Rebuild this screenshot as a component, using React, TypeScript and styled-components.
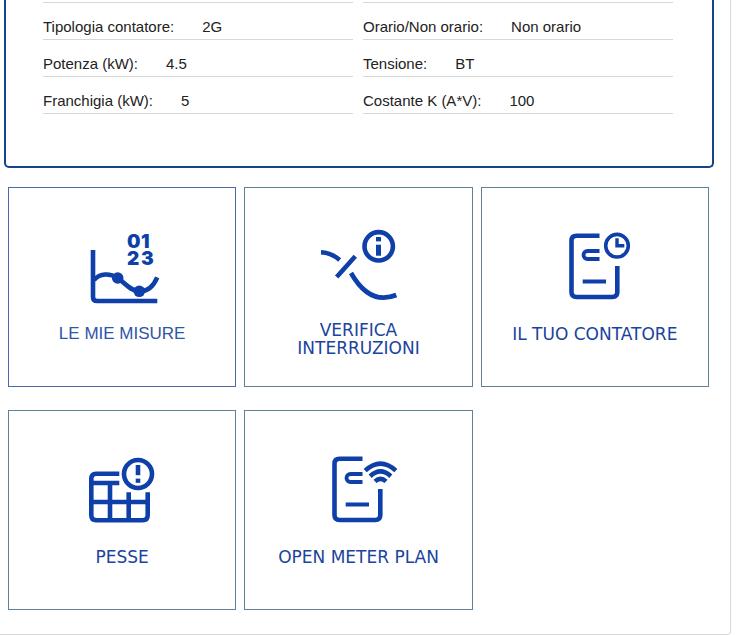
import React from "react";
import styled, { createGlobalStyle } from "styled-components";

const GlobalStyle = createGlobalStyle`
  *, *::before, *::after { box-sizing: border-box; }
  body { margin: 0; background: #fff; font-family: "Liberation Sans", Arial, sans-serif; }
`;

const BLUE = "#0f3fa8";

const Page = styled.main`
  margin-right: 13px;
  padding: 0 16px 24px 4px;
  border: solid #d9d9d9;
  border-width: 0 1px 1px 0;
  border-bottom-right-radius: 4px;
`;

const SupplyPanel = styled.section`
  display: grid;
  grid-template-columns: 1fr 1fr;
  gap: 10px;
  padding: 2px 39px 52px 37px;
  border: solid #15448c;
  border-width: 0 2px 2px;
  border-radius: 0 0 5px 5px;
`;

const Details = styled.dl`
  margin: 0;
  border-top: 1px solid #d6d8d8;
`;

const Detail = styled.div`
  display: flex;
  gap: 28px;
  padding: 15px 0 3px;
  border-bottom: 1px solid #d6d8d8;
  font-size: 15px;
  line-height: 18px;
  color: #222;
`;

const Term = styled.dt`
  margin: 0;
`;

const Value = styled.dd`
  margin: 0;
`;

const Services = styled.nav`
  display: grid;
  grid-template-columns: repeat(3, 1fr);
  grid-auto-rows: minmax(200px, auto);
  gap: 23px 8px;
  margin: 19px 5px 0 4px;
`;

const Card = styled.a<{ $active?: boolean }>`
  display: flex;
  flex-direction: column;
  align-items: center;
  padding-top: 40px;
  border: 1px solid ${(p) => (p.$active ? "#4a69a8" : "#5f8097")};
  background: #fff;
  color: #1a449c;
  text-decoration: none;
`;

const Label = styled.span<{ $plain?: boolean; $tall?: boolean }>`
  margin-top: ${(p) => (p.$tall ? 13 : 17)}px;
  font-family: ${(p) => (p.$plain ? '"Liberation Sans", Arial, sans-serif' : 'Verdana, "DejaVu Sans", sans-serif')};
  font-size: 17px;
  line-height: 18px;
  text-align: center;
  color: ${(p) => (p.$plain ? "#2f55a6" : "#1a449c")};
`;

const Drawing = styled.svg`
  width: 100px;
  height: 80px;
  flex: none;
  fill: none;
  stroke: ${BLUE};
  stroke-width: 4.6px;
`;

const Solid = styled.g`
  fill: ${BLUE};
  stroke: none;
`;

const Digits = styled.text`
  font: 900 19px Inter, "Liberation Sans", sans-serif;
`;

function Icon({ children }: { children: React.ReactNode }) {
  return (
    <Drawing viewBox="0 0 100 80" aria-hidden="true">
      {children}
    </Drawing>
  );
}

function MeasuresIcon() {
  return (
    <Icon>
      <path d="M21 22V69Q21 73 25 73H85.3" />
      <path d="M22 52C28 45 38 45 45.7 50C52 54 58 63 67.3 63.3C77 63.5 82 57 85.2 49.3" />
      <Solid>
        <circle cx="45.7" cy="50" r="5.8" />
        <circle cx="67.3" cy="63.3" r="5.8" />
        <Digits x="55 69" y="20">01</Digits>
        <Digits x="55 69" y="36.5">23</Digits>
      </Solid>
    </Icon>
  );
}

function OutagesIcon() {
  return (
    <Icon>
      <path d="M13 24.3Q23 24.6 31.7 32M47.3 28.3L28.7 49M43 45C55 66 70 74.5 88.3 67" />
      <circle cx="70.7" cy="18.3" r="14.2" />
      <Solid>
        <rect x="68" y="9" width="5" height="4.4" />
        <rect x="68" y="16.7" width="5" height="11" />
      </Solid>
    </Icon>
  );
}

function MeterBody() {
  return (
    <>
      <path d="M54.5 7.8H31.5Q26.5 7.8 26.5 12.8V64Q26.5 69 31.5 69H67.3Q72.3 69 72.3 64V38" />
      <path d="M54.5 23H42.5A4 4 0 0 0 42.5 31H54.5M37.7 53.5H61" strokeWidth="3.8" />
    </>
  );
}

function MeterIcon() {
  return (
    <Icon>
      <MeterBody />
      <circle cx="72" cy="17.7" r="11.3" strokeWidth="3.6" />
      <path d="M72 10.3V17.7H79.3" strokeWidth="3.4" />
    </Icon>
  );
}

function EmergencyPlanIcon() {
  return (
    <Icon>
      <path d="M47.3 22.7H24Q19.3 22.7 19.3 28V64.3Q19.3 69.3 24.3 69.3H70.7Q75.7 69.3 75.7 64.3V41.3" />
      <path d="M19.3 32H47.3M19.3 51H75.7M38 32V69.3M56.7 41.3V69.3" />
      <circle cx="66" cy="23" r="14" />
      <Solid>
        <rect x="63.7" y="14" width="4.6" height="10.2" />
        <rect x="63.7" y="27.6" width="4.6" height="4.2" />
      </Solid>
    </Icon>
  );
}

function SmartMeterIcon() {
  return (
    <Icon>
      <MeterBody />
      <path d="M57.2 19.6Q72.5 5.6 87.8 19.6M62.2 25.2Q72.5 15.6 82.8 25.2M67 30.4Q72.5 25.4 78 30.4" />
    </Icon>
  );
}

const columns = [
  [
    ["Tipologia contatore:", "2G"],
    ["Potenza (kW):", "4.5"],
    ["Franchigia (kW):", "5"],
  ],
  [
    ["Orario/Non orario:", "Non orario"],
    ["Tensione:", "BT"],
    ["Costante K (A*V):", "100"],
  ],
];

export default function App() {
  return (
    <>
      <GlobalStyle />
      <Page>
        <SupplyPanel>
          {columns.map((rows, i) => (
            <Details key={i}>
              {rows.map(([term, value]) => (
                <Detail key={term}>
                  <Term>{term}</Term>
                  <Value>{value}</Value>
                </Detail>
              ))}
            </Details>
          ))}
        </SupplyPanel>
        <Services>
          <Card href="#misure" $active>
            <MeasuresIcon />
            <Label $plain>LE MIE MISURE</Label>
          </Card>
          <Card href="#interruzioni">
            <OutagesIcon />
            <Label $tall>
              VERIFICA
              <br />
              INTERRUZIONI
            </Label>
          </Card>
          <Card href="#contatore">
            <MeterIcon />
            <Label>IL TUO CONTATORE</Label>
          </Card>
          <Card href="#pesse">
            <EmergencyPlanIcon />
            <Label>PESSE</Label>
          </Card>
          <Card href="#open-meter">
            <SmartMeterIcon />
            <Label>OPEN METER PLAN</Label>
          </Card>
        </Services>
      </Page>
    </>
  );
}
